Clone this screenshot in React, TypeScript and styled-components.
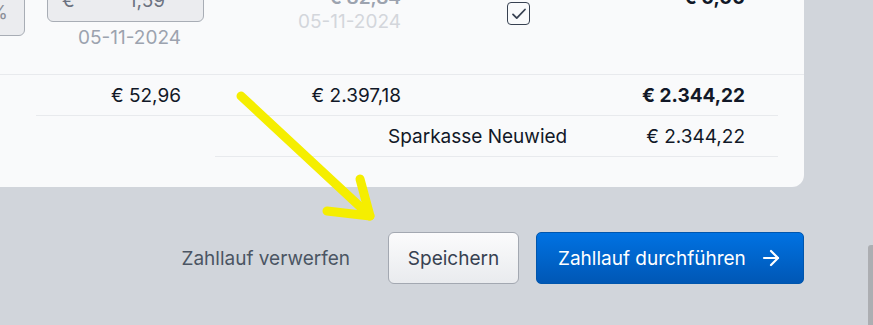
import React from "react";
import styled, { createGlobalStyle } from "styled-components";
import { ArrowRight } from "lucide-react";

const Global = createGlobalStyle`
  html, body { margin: 0; padding: 0; }
  body {
    background: #d1d5db;
    font-family: Inter, "Noto Sans", sans-serif;
    color: #111827;
    overflow: hidden;
    width: 873px;
    height: 325px;
  }
`;

const Page = styled.div`
  position: relative;
  width: 873px;
  height: 325px;
  overflow: hidden;
`;

const Card = styled.section`
  margin-top: -22px;
  width: 804px;
  background: #f9fafb;
  border-radius: 0 0 12px 0;
  padding-bottom: 30px;
`;

const Row = styled.div<{ $h: number }>`
  display: grid;
  grid-template-columns: 26px 178px 220px 188px 156px 36px;
  height: ${(p) => p.$h}px;
  font-size: 19px;
`;

const TopRow = styled(Row)`
  border-bottom: 1px solid #e8eaed;
`;

const Cell = styled.div<{ $pt?: number; $align?: string; $pr?: number }>`
  display: flex;
  flex-direction: column;
  align-items: ${(p) => p.$align ?? "flex-end"};
  padding-top: ${(p) => p.$pt ?? 0}px;
  padding-right: ${(p) => p.$pr ?? 23}px;
  box-sizing: border-box;
`;

const MidCell = styled.div<{ $bold?: boolean }>`
  display: flex;
  align-items: center;
  justify-content: flex-end;
  padding-right: 23px;
  font-weight: ${(p) => (p.$bold ? 700 : 400)};
  white-space: nowrap;
`;

const PercentBox = styled.div`
  width: 60px;
  margin-left: -35px;
  height: 80px;
  margin-top: -22px;
  box-sizing: border-box;
  border: 1px solid #a8adb5;
  border-radius: 6px;
  background: #ebecef;
  display: flex;
  align-items: flex-end;
  justify-content: flex-end;
  padding: 0 16px 11px 0;
  color: #8b9099;
  font-size: 19px;
`;

const AmountInput = styled.div`
  width: 157px;
  height: 44px;
  margin-right: -23px;
  box-sizing: border-box;
  border: 1px solid #a8adb5;
  border-radius: 6px;
  background: #ebecef;
  display: flex;
  align-items: center;
  justify-content: space-between;
  padding: 0 38px 0 14px;
  color: #6b7280;
  font-size: 19px;
`;

const DateText = styled.div<{ $light?: boolean; $mt: number }>`
  margin-top: ${(p) => p.$mt}px;
  line-height: 24px;
  font-size: 19px;
  color: ${(p) => (p.$light ? "#d3d6db" : "#9ca3af")};
`;

const Amount = styled.div<{ $tone?: "muted" | "strong" }>`
  line-height: 24px;
  font-weight: ${(p) => (p.$tone === "strong" ? 700 : p.$tone ? 600 : 400)};
  color: ${(p) => (p.$tone === "muted" ? "#9ca3af" : "#111827")};
`;

const CheckBox = styled.div`
  width: 23px;
  height: 23px;
  box-sizing: border-box;
  border: 1.5px solid #374151;
  border-radius: 4px;
  background: #f9fafb;
  display: flex;
  align-items: center;
  justify-content: center;
  margin-top: 24px;
  margin-left: 83px;
`;

const Divider = styled.div<{ $left: number; $right: number }>`
  height: 1px;
  background: #e8eaed;
  margin: 0 ${(p) => p.$right}px 0 ${(p) => p.$left}px;
`;

const BankRow = styled.div`
  display: grid;
  grid-template-columns: 388px 224px 156px 36px;
  height: 40px;
  font-size: 19px;
  align-items: center;
`;

const BankName = styled.div`
  grid-column: 2;
  white-space: nowrap;
`;

const BankAmount = styled.div`
  grid-column: 3;
  text-align: right;
  padding-right: 23px;
`;

const Actions = styled.div`
  display: flex;
  align-items: center;
  justify-content: flex-end;
  width: 804px;
  margin-top: 45px;
  gap: 17px;
`;

const TextButton = styled.button`
  background: none;
  border: none;
  font: inherit;
  font-size: 19px;
  color: #4b5563;
  padding: 0;
  margin-right: 21px;
  cursor: pointer;
`;

const SecondaryButton = styled.button`
  height: 52px;
  width: 131px;
  padding: 0;
  font: inherit;
  font-size: 19px;
  color: #374151;
  background: linear-gradient(#fbfbfc, #e9ebee);
  border: 1px solid #a3a8b1;
  border-radius: 6px;
`;

const PrimaryButton = styled.button`
  height: 52px;
  width: 268px;
  padding: 0 0 0 21px;
  font: inherit;
  font-size: 19px;
  color: #fff;
  background: linear-gradient(#0072e2, #0057b5);
  border: 1px solid #0056ad;
  border-radius: 5px;
  display: flex;
  align-items: center;
  gap: 13px;
`;

const Scroll = styled.div`
  position: absolute;
  right: 0;
  top: 245px;
  width: 5px;
  height: 80px;
  background: #acaeb2;
  border-radius: 3px 0 0 0;
`;

const Overlay = styled.svg`
  position: absolute;
  left: 0;
  top: 0;
  pointer-events: none;
`;

export default function App() {
  return (
    <Page>
      <Global />
      <Card>
        <TopRow $h={96}>
          <Cell $align="flex-start" $pr={0}>
            <PercentBox>%</PercentBox>
          </Cell>
          <Cell>
            <AmountInput>
              <span>€</span>
              <span>1,59</span>
            </AmountInput>
            <DateText $mt={4}>05-11-2024</DateText>
          </Cell>
          <Cell $pt={8}>
            <Amount $tone="muted">€ 82,84</Amount>
            <DateText $light $mt={0}>05-11-2024</DateText>
          </Cell>
          <Cell $align="flex-start">
            <CheckBox>
              <svg width="18" height="18" viewBox="0 0 24 24" fill="none" stroke="#374151" strokeWidth="2.4" strokeLinecap="round" strokeLinejoin="round">
                <path d="M4 12.5l5 5L20 6" />
              </svg>
            </CheckBox>
          </Cell>
          <Cell $pt={8}>
            <Amount $tone="strong">€ 0,00</Amount>
          </Cell>
          <div />
        </TopRow>
        <Row $h={40}>
          <div />
          <MidCell>€ 52,96</MidCell>
          <MidCell>€ 2.397,18</MidCell>
          <div />
          <MidCell $bold>€ 2.344,22</MidCell>
          <div />
        </Row>
        <Divider $left={36} $right={26} />
        <BankRow>
          <BankName>Sparkasse Neuwied</BankName>
          <BankAmount>€ 2.344,22</BankAmount>
        </BankRow>
        <Divider $left={215} $right={26} />
      </Card>
      <Actions>
        <TextButton>Zahllauf verwerfen</TextButton>
        <SecondaryButton>Speichern</SecondaryButton>
        <PrimaryButton>
          Zahllauf durchführen
          <ArrowRight size={24} strokeWidth={2.2} />
        </PrimaryButton>
      </Actions>
      <Scroll />
      <Overlay width="873" height="325" viewBox="0 0 873 325">
        <g stroke="#f5ee00" strokeWidth="9" strokeLinecap="round" fill="none">
          <path d="M241 96 L368 214" />
          <path d="M360 179 L370 216" />
          <path d="M327 211 L370 216" />
        </g>
      </Overlay>
    </Page>
  );
}
